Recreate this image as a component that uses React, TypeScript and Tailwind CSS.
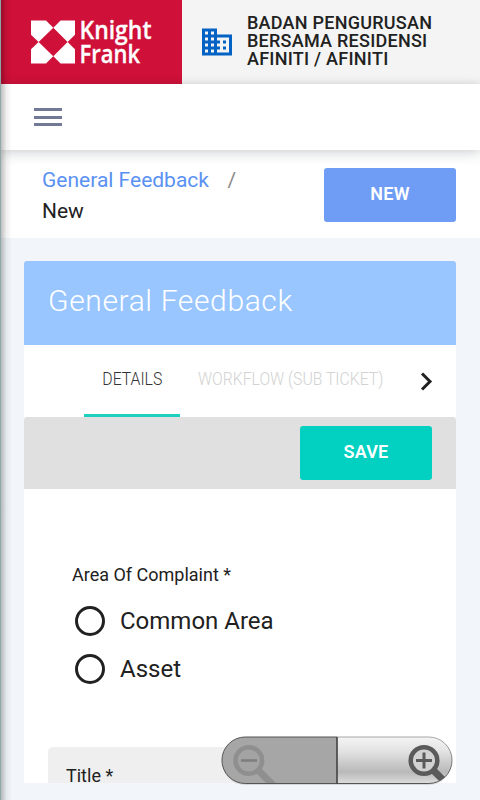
import { MdBusiness } from "react-icons/md";

const areas = ["Common Area", "Asset"];

const KnightFrankLogo = () => (
  <svg width="181" height="84" viewBox="0 0 181 84" className="block">
    <g fill="#fff">
      <path d="M31 20.5H46L53.3 27.7L38.6 42L31 34.7Z" />
      <path d="M75 20.5H60.6L53.3 27.7L67.6 42L75 34.7Z" />
      <path d="M31 63.5H46L53.3 56.3L38.6 42L31 49.3Z" />
      <path d="M75 63.5H60.6L53.3 56.3L67.6 42L75 49.3Z" />
      <text
        x="79.5"
        y="39.2"
        fontSize="25.5"
        textLength="72"
        lengthAdjust="spacingAndGlyphs"
        className="font-['Open_Sans',sans-serif] font-semibold"
        stroke="#fff"
        strokeWidth="0.3"
      >
        Knight
      </text>
      <text
        x="79.5"
        y="63.4"
        fontSize="25.5"
        textLength="60.5"
        lengthAdjust="spacingAndGlyphs"
        className="font-['Open_Sans',sans-serif] font-semibold"
        stroke="#fff"
        strokeWidth="0.3"
      >
        Frank
      </text>
    </g>
  </svg>
);

const ZoomControls = () => (
  <svg width="232" height="50" viewBox="0 0 232 50" className="block">
    <defs>
      <linearGradient id="silver" x1="0" y1="0" x2="0" y2="1">
        <stop offset="0" stopColor="#f5f5f5" />
        <stop offset="0.3" stopColor="#e4e4e4" />
        <stop offset="0.75" stopColor="#b9b9b9" />
        <stop offset="1" stopColor="#dedede" />
      </linearGradient>
      <linearGradient id="rim" x1="0" y1="0" x2="0" y2="1">
        <stop offset="0" stopColor="#a8a8a8" />
        <stop offset="1" stopColor="#555" />
      </linearGradient>
      <clipPath id="pill">
        <rect x="1" y="1" width="230" height="46.5" rx="23.2" />
      </clipPath>
    </defs>
    <rect x="1" y="2" width="230" height="47" rx="23.5" fill="#000" opacity="0.12" />
    <g clipPath="url(#pill)">
      <rect width="116" height="48" fill="#a6a6a6" />
      <rect x="116" width="116" height="48" fill="url(#silver)" />
      <g fill="none" stroke="#8f8f8f">
        <path d="M37 34L52 49" strokeWidth="7" />
        <circle cx="27.8" cy="24.5" r="13.3" fill="#a3a3a3" strokeWidth="4.5" />
        <path d="M20 24.5H36" strokeWidth="2.6" stroke="#7d7d7d" />
      </g>
      <g fill="none" stroke="#5a5a5a">
        <path d="M212 34L226 48" strokeWidth="7" />
        <circle cx="203" cy="24.5" r="13.3" fill="#d2d2d2" strokeWidth="4.5" />
        <path d="M195 24.5H211M203 16.5V32.5" strokeWidth="3" />
      </g>
    </g>
    <path d="M116 1H24.2A23.2 23.2 0 0 0 24.2 47.5H116Z" fill="none" stroke="#555" />
    <path d="M116 1H207.8A23.2 23.2 0 0 1 207.8 47.5H116" fill="none" stroke="url(#rim)" />
    <path d="M116 1V48" stroke="#484848" strokeWidth="1.4" />
  </svg>
);

const App = () => {
  return (
    <div className="relative flex h-[800px] w-[480px] flex-col overflow-hidden bg-[#f2f6fa] font-[Roboto,sans-serif] text-[#212121]">
      <header className="flex h-[84px] shrink-0 bg-[#f4f4f4]">
        <div className="w-[181.5px] shrink-0 bg-[#cf1038]">
          <KnightFrankLogo />
        </div>
        <MdBusiness className="mt-6 ml-[17.5px] size-9 shrink-0 text-[#0363c4]" />
        <p className="mt-[14px] ml-3 text-[18px] leading-[18px] font-medium tracking-[0.25px] whitespace-nowrap">
          BADAN PENGURUSAN
          <br />
          BERSAMA RESIDENSI
          <br />
          AFINITI / AFINITI
        </p>
      </header>

      <nav className="z-10 h-[66px] shrink-0 bg-white pt-6 pl-[34px] shadow-[0_3px_12px_rgba(50,60,75,0.22),0_-1px_6px_rgba(0,0,0,0.05)]">
        <div className="flex w-[27.5px] flex-col gap-[4.5px]">
          <span className="h-[3px] bg-[#727995]"></span>
          <span className="h-[3px] bg-[#727995]"></span>
          <span className="h-[3px] bg-[#727995]"></span>
        </div>
      </nav>

      <section className="flex h-[87.5px] shrink-0 justify-between bg-white pr-6 pl-[42px]">
        <div className="pt-[14.5px] text-[21px] leading-[31px]">
          <div className="flex">
            <a className="text-[#5a91f3]">General Feedback</a>
            <span className="ml-[18.5px] text-[#8c8c8c]">/</span>
          </div>
          <div>New</div>
        </div>
        <button className="mt-[17.5px] h-[54px] w-[132px] rounded-[3px] bg-[#6f9df5] pb-[3px] text-[18px] font-semibold tracking-[0.2px] text-white">
          NEW
        </button>
      </section>

      <main className="mx-6 mt-[23.5px] flex h-[522px] shrink-0 flex-col overflow-hidden rounded-t-[3px] bg-white">
        <h1 className="h-[84px] shrink-0 bg-[#9ac6ff] pt-[20px] pl-6 text-[30px] leading-[40px] font-light tracking-[0.62px] text-white">
          General Feedback
        </h1>
        <div className="flex h-[72px] shrink-0 pl-[60px] text-[17.5px] font-light">
          <div className="flex w-24 justify-center border-b-[3px] border-[#1dd0c0] pt-[21px] text-[#333]">
            <span className="scale-x-90">DETAILS</span>
          </div>
          <div className="ml-[18px] w-[200px] origin-left scale-x-90 pt-[21px] whitespace-nowrap text-[#d2d2d2]">
            WORKFLOW (SUB TICKET)
          </div>
          <svg width="24" height="24" viewBox="0 0 24 24" className="mt-[24px] ml-[16px]">
            <path d="M8 4.5L16 12.5L8 20.5" fill="none" stroke="#212121" strokeWidth="3" />
          </svg>
        </div>
        <div className="flex h-[72px] shrink-0 justify-end rounded-t-[3px] bg-[#e0e0e0] pt-[9px] pr-6">
          <button className="h-[54px] w-[132px] rounded-[3px] bg-[#02d1c1] pb-[3px] text-[18px] font-semibold tracking-[0.2px] text-white">
            SAVE
          </button>
        </div>
        <div className="h-[258px] shrink-0 pt-[71.5px] pl-12">
          <div className="text-[18px] leading-[27px]">Area Of Complaint *</div>
          <div className="mt-[9px]">
            {areas.map((area) => (
              <label key={area} className="flex h-12 items-center text-[24px]">
                <span className="mt-[1px] ml-[3px] size-[30px] rounded-full border-[3px] border-[#212121]"></span>
                <span className="ml-[15px]">{area}</span>
              </label>
            ))}
          </div>
        </div>
        <div className="mr-6 ml-6 h-[60px] shrink-0 rounded-t-[5px] bg-[#efefef] pt-[14.5px] pl-[18px] text-[18px] leading-[27px]">
          Title *
        </div>
      </main>

      <div className="absolute top-[736px] left-[221px] z-20">
        <ZoomControls />
      </div>
      <div className="absolute inset-y-0 left-0 z-20 w-3 border-l border-[#8fa9ab] bg-linear-to-r from-black/25 via-black/6 to-transparent"></div>
    </div>
  );
};

export default App;
